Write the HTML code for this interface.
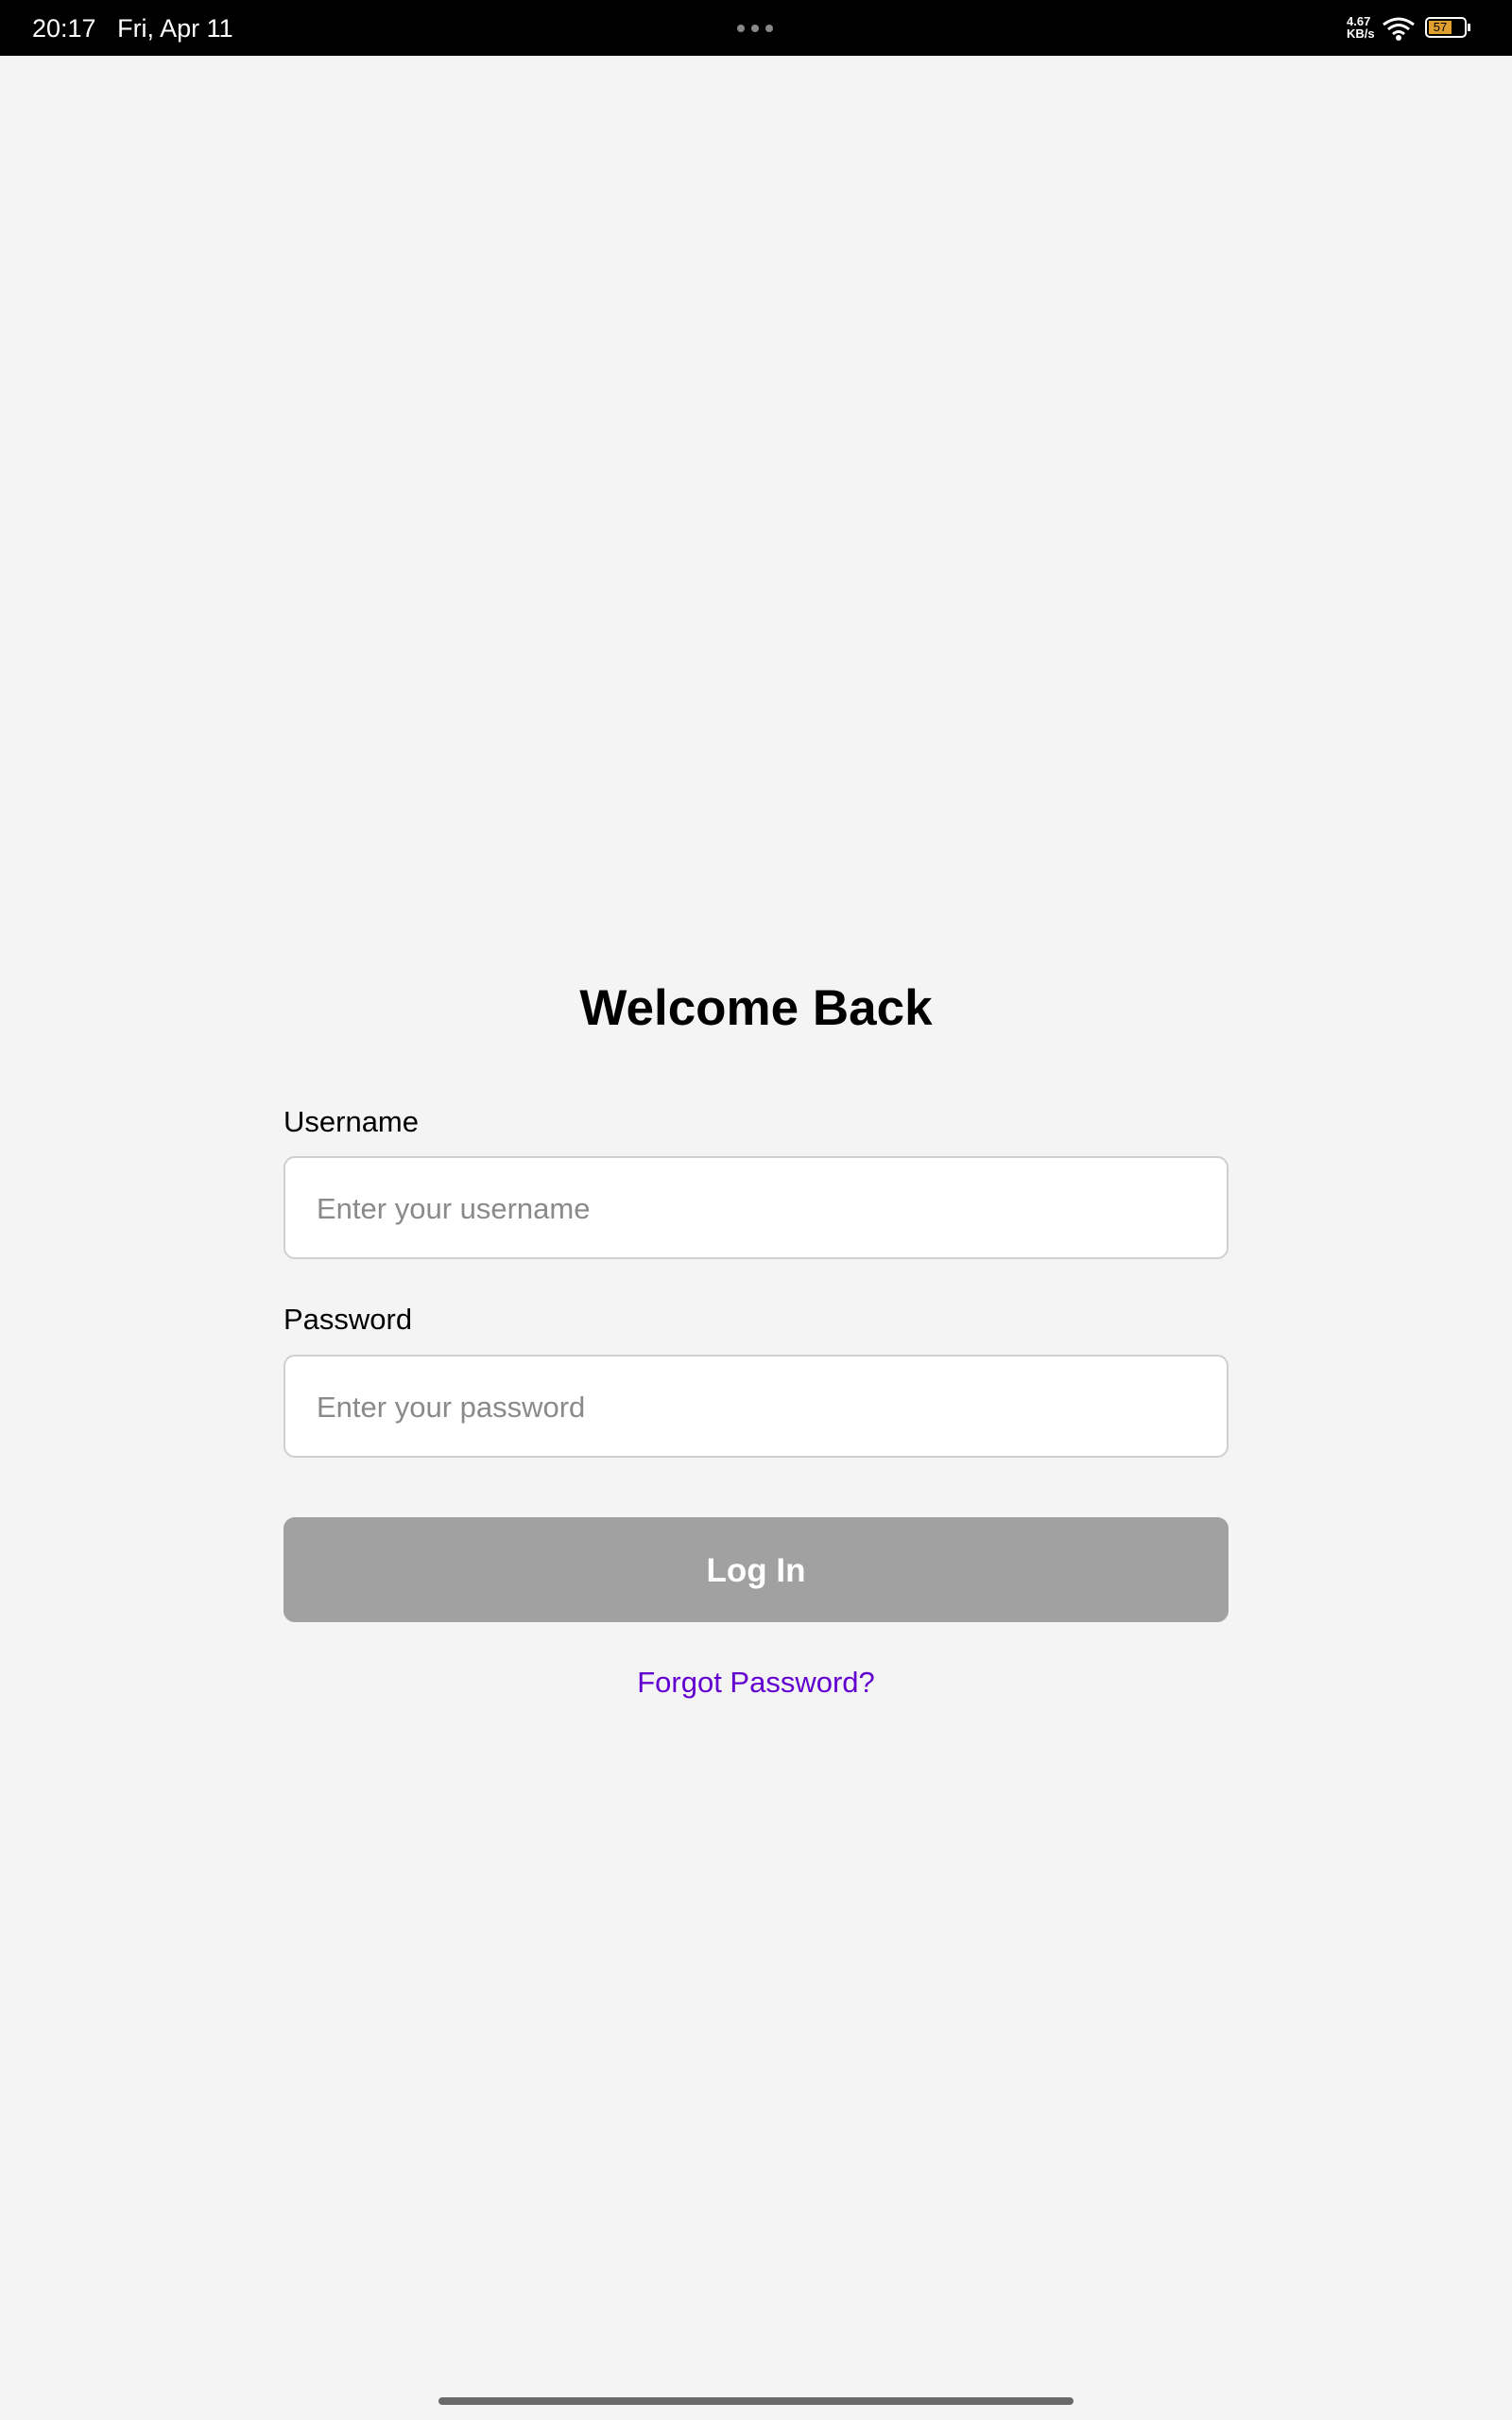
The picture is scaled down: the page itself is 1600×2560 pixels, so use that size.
<!DOCTYPE html>
<html><head><meta charset="utf-8"><style>
*{margin:0;padding:0;box-sizing:border-box}
body{width:1600px;height:2560px;background:#f4f4f4;font-family:"Liberation Sans",sans-serif;position:relative;overflow:hidden}
.sb{position:absolute;left:0;top:0;width:1600px;height:59px;background:#000;color:#fff}
.abs{position:absolute}
.label{position:absolute;left:300px;font-size:31px;color:#000}
.inp{position:absolute;left:300px;width:1000px;height:109px;background:#fff;border:2px solid #cfcfcf;border-radius:12px;font-size:31px;color:#8a8a8a;padding-left:33px;line-height:107px}
</style></head><body>
<div class="sb">
<div class="abs" style="left:34px;top:15px;font-size:27px;">20:17&nbsp;&nbsp;&nbsp;Fri, Apr 11</div>
<div class="abs" style="left:780px;top:26px;width:8px;height:8px;border-radius:50%;background:#888"></div>
<div class="abs" style="left:795px;top:26px;width:8px;height:8px;border-radius:50%;background:#888"></div>
<div class="abs" style="left:810px;top:26px;width:8px;height:8px;border-radius:50%;background:#888"></div>
<div class="abs" style="left:1425px;top:16px;font-size:13px;font-weight:bold;line-height:13px">4.67<br>KB/s</div>
<svg class="abs" style="left:1462px;top:16px" width="36" height="28" viewBox="0 0 36 28"><path d="M2 10 Q18 -2 34 10" stroke="#fff" stroke-width="3" fill="none"/><path d="M7 15 Q18 6 29 15" stroke="#fff" stroke-width="3" fill="none"/><path d="M12 20 Q18 15 24 20" stroke="#fff" stroke-width="3" fill="none"/><circle cx="18" cy="24" r="3" fill="#fff"/></svg>
<div class="abs" style="left:1508px;top:18px;width:44px;height:22px;border:2px solid #fff;border-radius:5px;padding:2px"><div style="width:24px;height:14px;background:#e0a030;font-size:13px;color:#000;text-align:center;line-height:14px">57</div></div>
<div class="abs" style="left:1553px;top:25px;width:3px;height:8px;background:#fff"></div>
</div>
<div class="abs" style="left:0;width:1600px;top:1036px;text-align:center;font-size:53px;font-weight:bold;color:#000">Welcome Back</div>
<div class="label" style="top:1169px">Username</div>
<div class="inp" style="top:1223px">Enter your username</div>
<div class="label" style="top:1378px">Password</div>
<div class="inp" style="top:1433px">Enter your password</div>
<div class="abs" style="left:300px;top:1605px;width:1000px;height:111px;background:#a1a1a1;border-radius:12px;color:#fff;font-size:35px;font-weight:bold;text-align:center;line-height:113px">Log In</div>
<div class="abs" style="left:0;width:1600px;top:1762px;text-align:center;font-size:31px;color:#6200d0">Forgot Password?</div>
<div class="abs" style="left:464px;top:2536px;width:672px;height:8px;border-radius:4px;background:#6a6a6a"></div>
</body></html>
